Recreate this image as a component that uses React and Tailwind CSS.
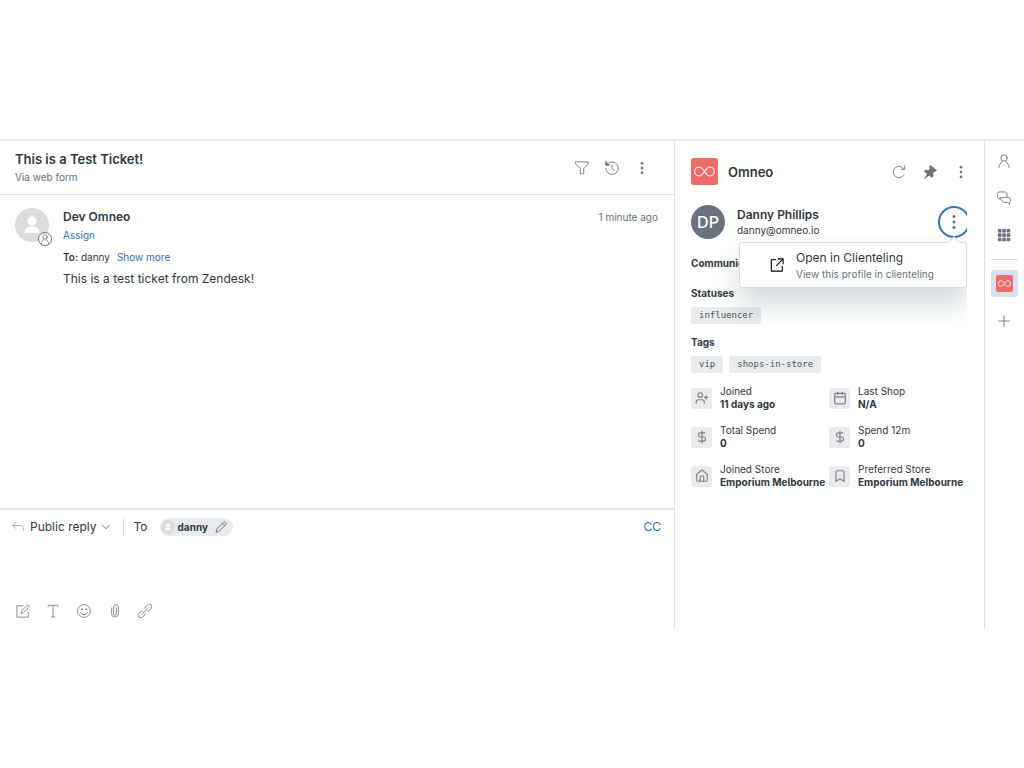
import React from "react";
import { Bookmark, Calendar, DollarSign, House, UserPlus } from "lucide-react";

const DETAILS = [
    { label: "Joined", value: "11 days ago", icon: UserPlus },
    { label: "Last Shop", value: "N/A", icon: Calendar },
    { label: "Total Spend", value: "0", icon: DollarSign },
    { label: "Spend 12m", value: "0", icon: DollarSign },
    { label: "Joined Store", value: "Emporium Melbourne", icon: House },
    { label: "Preferred Store", value: "Emporium Melbourne", icon: Bookmark },
];

function Icon({ children, className = "size-3.5" }) {
    return (
        <svg
            viewBox="0 0 16 16"
            fill="none"
            stroke="currentColor"
            strokeLinecap="round"
            strokeLinejoin="round"
            className={`shrink-0 ${className}`}
            aria-hidden="true"
        >
            {children}
        </svg>
    );
}

function DotsIcon({ className }) {
    return (
        <Icon className={className}>
            <g fill="currentColor" stroke="none">
                <circle cx="8" cy="2.5" r="1.5" />
                <circle cx="8" cy="8" r="1.5" />
                <circle cx="8" cy="13.5" r="1.5" />
            </g>
        </Icon>
    );
}

function IconButton({ label, children, className = "" }) {
    return (
        <button type="button" aria-label={label} className={`flex items-center justify-center ${className}`}>
            {children}
        </button>
    );
}

function OmneoLogo({ className }) {
    return (
        <svg viewBox="0 0 27 27" className={`shrink-0 ${className}`} aria-hidden="true">
            <rect width="27" height="27" rx="3" fill="#ef6b67" />
            <path
                d="M13.5 13.5C11.600 10.600 10.200 9 8.200 9a4.500 4.500 0 0 0 0 9c2 0 3.400-1.600 5.300-4.500s3.300-4.500 5.300-4.500a4.500 4.500 0 0 1 0 9c-2 0-3.400-1.600-5.300-4.500z"
                fill="none"
                stroke="#fff"
                strokeWidth="1.200"
            />
        </svg>
    );
}

function PersonAvatar({ className }) {
    return (
        <svg viewBox="0 0 34 34" className={`shrink-0 ${className}`} aria-hidden="true">
            <circle cx="17" cy="17" r="17" fill="#dcdcdc" />
            <circle cx="17" cy="13" r="4.500" fill="#fff" />
            <path d="M9.500 25v-1.500c0-3.200 3.500-5 7.500-5s7.500 1.800 7.500 5V25z" fill="#fff" />
        </svg>
    );
}

function UserIcon({ className }) {
    return (
        <Icon className={className}>
            <circle cx="8" cy="4.500" r="3.600" />
            <path d="M2.200 15.200c.3-3 2-5.200 4-6.700M13.800 15.200c-.3-3-2-5.200-4-6.700" />
        </Icon>
    );
}

function TicketHeader() {
    return (
        <header className="flex items-center justify-between border-b border-[#dfe2e4] pt-2 pr-[25px] pb-2 pl-[15px]">
            <div>
                <h1 className="text-[13px] leading-5 font-semibold">This is a Test Ticket!</h1>
                <p className="text-[10px] leading-[17px] text-[#68737d]">Via web form</p>
            </div>
            <div className="flex gap-4 text-[#68737d]">
                <IconButton label="Filter">
                    <Icon>
                        <path d="M1 1h14v2.500l-5 5V14L6 15V8.500l-5-5z" />
                    </Icon>
                </IconButton>
                <IconButton label="Events">
                    <Icon>
                        <path d="M2.800 3.200A7.200 7.200 0 1 1 .8 8.500M8 4.500v4l2.600 2.300" />
                        <path d="M.8 .8v4h4z" fill="currentColor" />
                    </Icon>
                </IconButton>
                <IconButton label="Ticket options">
                    <DotsIcon />
                </IconButton>
            </div>
        </header>
    );
}

function Message() {
    return (
        <article className="flex flex-1 items-start gap-3.5 px-[15px] pt-[13px]">
            <div className="relative">
                <PersonAvatar className="size-[34px]" />
                <span className="absolute -right-[3px] -bottom-1 flex size-3.5 items-center justify-center rounded-full border border-[#68737d] bg-white text-[#49545c]">
                    <UserIcon className="size-2.5" />
                </span>
            </div>
            <div className="flex-1">
                <div className="flex items-center justify-between pr-px">
                    <h2 className="text-[12px] leading-[18px] font-semibold">Dev Omneo</h2>
                    <time className="text-[10px] leading-[18px] text-[#68737d]">1 minute ago</time>
                </div>
                <a href="#assign" className="block w-fit text-[10px] leading-[18px] text-[#3070b8]">Assign</a>
                <p className="mt-1 flex gap-[7px] text-[10px] leading-[18px]">
                    <span><b className="font-semibold">To:</b> danny</span>
                    <a href="#more" className="text-[#3070b8]">Show more</a>
                </p>
                <p className="mt-1 text-[12px] leading-[18px]">This is a test ticket from Zendesk!</p>
            </div>
        </article>
    );
}

function Composer() {
    return (
        <section className="flex h-[121px] flex-col justify-between border-t-2 border-[#e2e5e7] pt-[7px] pb-[11px]">
            <div className="flex h-5 items-center pr-[13px] pl-3 text-[12px]">
                <button type="button" className="flex items-center">
                    <Icon className="size-3 text-[#87929d]">
                        <path d="M5 2L1 6l4 4M1 6h9.500c3 0 5 2 5 6.500" />
                    </Icon>
                    <span className="ml-1.5">Public reply</span>
                    <Icon className="ml-1 size-2.5 text-[#68737d]">
                        <path d="M2.500 5.500L8 10.500l5.500-5" strokeWidth="1.500" />
                    </Icon>
                </button>
                <span className="ml-3 h-5 w-px bg-[#dfe2e4]" />
                <span className="ml-2.5">To</span>
                <span className="ml-3 flex h-[18px] items-center rounded-full bg-[#e9ebed] pr-1.5 pl-px">
                    <PersonAvatar className="size-3.5" />
                    <span className="mx-[3px] text-[10px] font-bold">danny</span>
                    <IconButton label="Edit recipient" className="ml-1 text-[#49545c]">
                        <Icon className="size-3">
                            <path d="M1.500 14.500l1-4 9-9c.6-.6 1.400-.6 2 0l1 1c.6.6.6 1.400 0 2l-9 9zM10 3l3 3" />
                        </Icon>
                    </IconButton>
                </span>
                <a href="#cc" className="ml-auto text-[#3070b8]">CC</a>
            </div>
            <div className="flex gap-4 pl-4 text-[#78838d]">
                <IconButton label="Compose">
                    <Icon>
                        <path d="M8 2H1v13h13V9.500M6 10.500l.8-3L13 1.300c.4-.4 1-.4 1.300 0l.5.5c.4.4.4 1 0 1.300L8.800 9.500z" />
                    </Icon>
                </IconButton>
                <IconButton label="Text formatting">
                    <Icon>
                        <path d="M2.500 3V1.500h11V3M8 1.500v13M6 14.800h4" />
                    </Icon>
                </IconButton>
                <IconButton label="Insert emoji" className="ml-px">
                    <Icon>
                        <circle cx="8" cy="8" r="7.400" />
                        <path d="M4 9.500c.8 1.800 2.200 2.600 4 2.600s3.200-.8 4-2.600" />
                        <circle cx="5.500" cy="6" r=".6" fill="currentColor" />
                        <circle cx="10.500" cy="6" r=".6" fill="currentColor" />
                    </Icon>
                </IconButton>
                <IconButton label="Attach file" className="ml-px">
                    <Icon>
                        <path d="M4.200 4.500v6.700a3.800 3.800 0 0 0 7.600 0V3.400a2.700 2.700 0 0 0-5.400 0v7.800a1.600 1.600 0 0 0 3.200 0V4.500" />
                    </Icon>
                </IconButton>
                <IconButton label="Insert link">
                    <Icon>
                        <g transform="rotate(-45 8 8)">
                            <path d="M5.600 10.200A3.200 3.200 0 0 1 3.500 11H1.200a3 3 0 0 1 0-6h2.300a3.200 3.200 0 0 1 2.100.8M10.400 5.800a3.200 3.200 0 0 1 2.100-.8h2.300a3 3 0 0 1 0 6h-2.300a3.200 3.200 0 0 1-2.100-.8M4 8h8" />
                        </g>
                    </Icon>
                </IconButton>
            </div>
        </section>
    );
}

function ProfileMenu() {
    return (
        <div className="absolute top-[37px] right-0 w-[228px] rounded-[3px] border border-[#d8dcde] bg-white py-1.5 pl-[30px] shadow-[0_16px_28px_0_rgba(4,50,60,0.18)]">
            <span className="absolute -top-[5px] right-2 size-2 rotate-45 border-t border-l border-[#d8dcde] bg-white" />
            <a href="#clienteling" className="flex items-center gap-3">
                <Icon className="size-3.5 text-black">
                    <path d="M6.500 2H1.500v13h12.500V9.500M9.500 1H15v5.500M15 1L7.500 8.500" strokeWidth="1.200" strokeLinecap="square" strokeLinejoin="miter" />
                </Icon>
                <span className="whitespace-nowrap">
                    <span className="block text-[12px] leading-[18px]">Open in Clienteling</span>
                    <span className="block text-[10px] leading-[14px] text-[#68737d]">View this profile in clienteling</span>
                </span>
            </a>
        </div>
    );
}

function Tag({ children }) {
    return (
        <span className="rounded-xs bg-[#e9ebed] px-2 font-['DejaVu_Sans_Mono',monospace] text-[9px] leading-[17px] text-[#49545c]">
            {children}
        </span>
    );
}

function CustomerPanel() {
    return (
        <aside className="w-[310px] shrink-0 border-l border-[#dfe2e4] pt-[17px]">
            <header className="flex items-center pr-4 pl-4">
                <OmneoLogo className="size-[27px]" />
                <h2 className="ml-2.5 text-[13px] leading-5 font-semibold">Omneo</h2>
                <div className="ml-auto flex gap-[17px] text-[#68737d]">
                    <IconButton label="Reload">
                        <Icon>
                            <path d="M13.500 11.500A6.500 6.500 0 1 1 13.500 4.500M14.500 1v4h-4" />
                        </Icon>
                    </IconButton>
                    <IconButton label="Pin app">
                        <Icon>
                            <path d="M8.800.8l6.500 5.200-1.200 1.200-1.300-.2-1.600 2.300.3 3.200-1.500 1.600-3-2.600-5 3.700 3.200-5-3.700-3L3.200 6l3.200.3 2-2.200L7.600 2z" fill="currentColor" />
                        </Icon>
                    </IconButton>
                    <IconButton label="App options">
                        <DotsIcon />
                    </IconButton>
                </div>
            </header>

            {/* the app frame clips whatever runs past its right edge */}
            <div className="mr-[17px] overflow-hidden pt-5 pb-4 pl-4">
                <div className="relative z-10 flex items-center">
                    <span className="flex size-[34px] shrink-0 items-center justify-center rounded-full bg-[#68737d] text-[16px] font-medium text-white">
                        DP
                    </span>
                    <div className="ml-3">
                        <h3 className="text-[12px] leading-4 font-semibold">Danny Phillips</h3>
                        <p className="text-[10px] leading-[14px]">danny@omneo.io</p>
                    </div>
                    <IconButton
                        label="Profile actions"
                        className="-mr-[3px] ml-auto size-8 rounded-full border-2 border-[#3070b8] text-[#68737d]"
                    >
                        <DotsIcon className="size-4" />
                    </IconButton>
                    <ProfileMenu />
                </div>

                <h4 className="mt-4 text-[10px] leading-4 font-bold">Communication</h4>
                <h4 className="mt-3.5 text-[10px] leading-4 font-bold">Statuses</h4>
                <div className="mt-1.5 flex gap-1.5">
                    <Tag>influencer</Tag>
                </div>
                <h4 className="mt-2.5 text-[10px] leading-4 font-bold">Tags</h4>
                <div className="mt-1.5 flex gap-1.5">
                    <Tag>vip</Tag>
                    <Tag>shops-in-store</Tag>
                </div>

                <dl className="mt-3 grid grid-cols-2 gap-y-[13px] text-[10px]">
                    {DETAILS.map(({ label, value, icon: DetailIcon }) => (
                        <div key={label} className="flex items-center gap-2 whitespace-nowrap">
                            <span className="flex size-[21px] shrink-0 items-center justify-center rounded-[3px] bg-[#e9ebed] text-[#808186]">
                                <DetailIcon className="size-3.5" strokeWidth={2} />
                            </span>
                            <div className="leading-[13px]">
                                <dt>{label}</dt>
                                <dd className="font-bold">{value}</dd>
                            </div>
                        </div>
                    ))}
                </dl>
            </div>
        </aside>
    );
}

function AppRail() {
    return (
        <nav className="flex w-10 shrink-0 flex-col items-center border-l border-[#dfe2e4] pt-[13px] pr-px text-[#68737d]">
            <IconButton label="User">
                <UserIcon className="size-3.5" />
            </IconButton>
            <IconButton label="Conversations" className="mt-[23px]">
                <Icon>
                    <path d="M3.500 9.500L2 8.500C.8 7.800.5 6.500.5 5V4C.5 2 1.500 1 3.500 1h5c2 0 3 1 3 3v.5c0 2-1 3-3 3H4zM5.500 10c.3 2 1.300 3 3 3H12l2.500 2.300V12.500c.7-.6 1-1.300 1-2.500s-.8-2.800-3-2.800h-1.500" />
                </Icon>
            </IconButton>
            <IconButton label="Apps" className="mt-[23px]">
                <Icon>
                    <g fill="currentColor" stroke="none">
                        {[1, 6, 11].map((y) => [1, 6, 11].map((x) => <rect key={`${x}-${y}`} x={x} y={y} width="4.200" height="4.200" rx="1" />))}
                    </g>
                </Icon>
            </IconButton>
            <hr className="mt-[17px] w-[27px] border-[#d8dcde]" />
            <IconButton label="Omneo" className="mt-2.5 size-[27px] rounded-[3px] bg-[#d6e3ef]">
                <OmneoLogo className="size-[17px]" />
            </IconButton>
            <IconButton label="Add app" className="mt-[17px]">
                <Icon>
                    <path d="M8 2v12M2 8h12" />
                </Icon>
            </IconButton>
        </nav>
    );
}

export default function App() {
    return (
        <div className="flex min-h-screen items-center bg-white font-[Inter,sans-serif] text-[#2f3941]">
            <div className="flex min-h-[490px] w-full border-t-2 border-[#e9ebed]">
                <main className="flex min-w-0 flex-1 flex-col">
                    <TicketHeader />
                    <Message />
                    <Composer />
                </main>
                <CustomerPanel />
                <AppRail />
            </div>
        </div>
    );
}
